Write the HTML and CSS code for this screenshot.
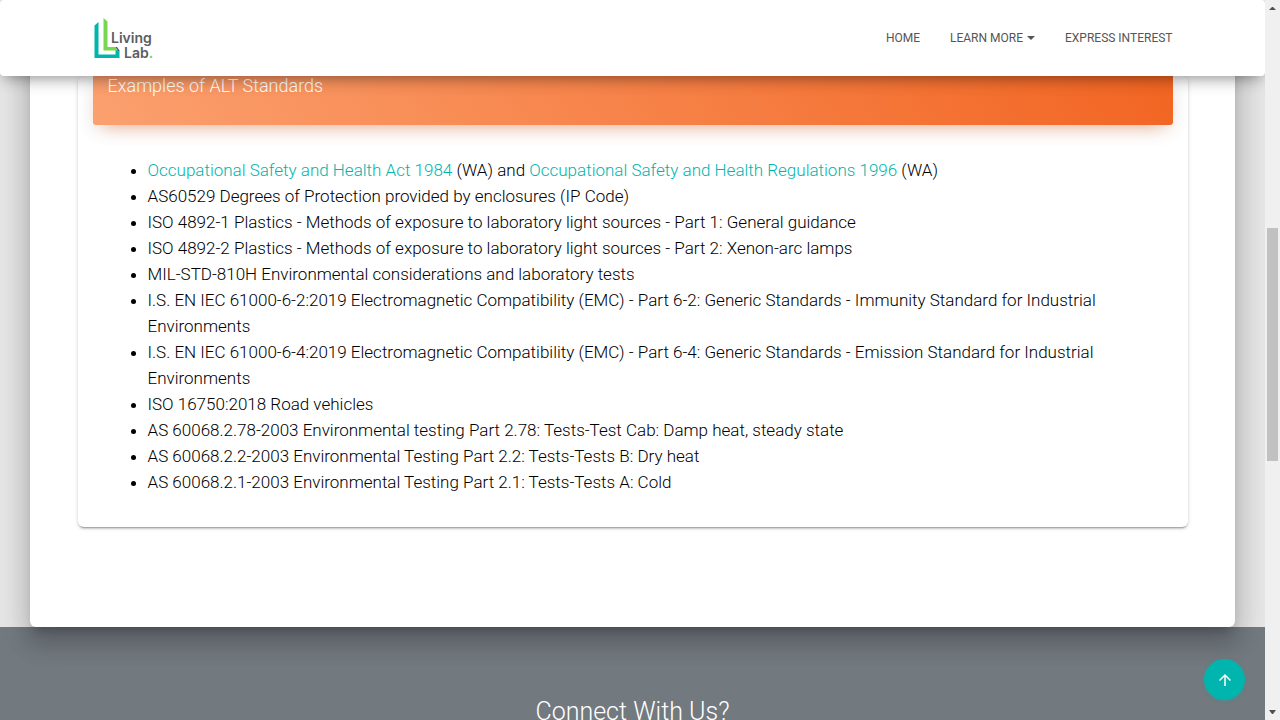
FILE: index.html
```html
<!DOCTYPE html>
<html lang="en">
<head>
<meta charset="utf-8">
<meta name="viewport" content="width=device-width, initial-scale=1">
<title>Living Lab - ALT Standards</title>
<link rel="stylesheet" href="styles.css">
</head>
<body>
<div class="viewport">
  <div class="page">
    <header class="navbar">
      <nav class="navbar-inner">
        <a class="brand" href="#" aria-label="Living Lab home">
          <svg width="66" height="44" viewBox="0 0 66 44">
            <path fill="#00b5ad" d="M1.500 9.500 5.500 6V38.500H22.500V34H26.500V42H1.500Z"/>
            <path fill="#76d750" d="M10.500 2 14.500 5.500V31H22.500L25 34.500H10.500Z"/>
            <path fill="#4b5057" d="M22.500 31H24L26.500 34.500H25Z"/>
            <g class="brand-text">
              <text x="18" y="27">Living</text>
              <text x="31" y="42">Lab<tspan class="brand-dot">.</tspan></text>
            </g>
          </svg>
        </a>
        <ul class="menu">
          <li><a class="menu-link" href="#">Home</a></li>
          <li><button class="menu-link" type="button" aria-haspopup="true">Learn More<span class="caret"></span></button></li>
          <li><a class="menu-link" href="#">Express Interest</a></li>
        </ul>
      </nav>
    </header>

    <main class="main-raised">
      <section class="container">
        <article class="card">
          <h4 class="card-header">Examples of ALT Standards</h4>
          <ul class="standards">
            <li><a href="#">Occupational Safety and Health Act 1984</a> (WA) and <a href="#">Occupational Safety and Health Regulations 1996</a> (WA)</li>
            <li>AS60529 Degrees of Protection provided by enclosures (IP Code)</li>
            <li>ISO 4892-1 Plastics - Methods of exposure to laboratory light sources - Part 1: General guidance</li>
            <li>ISO 4892-2 Plastics - Methods of exposure to laboratory light sources - Part 2: Xenon-arc lamps</li>
            <li>MIL-STD-810H Environmental considerations and laboratory tests</li>
            <li>I.S. EN IEC 61000-6-2:2019 Electromagnetic Compatibility (EMC) - Part 6-2: Generic Standards - Immunity Standard for Industrial Environments</li>
            <li>I.S. EN IEC 61000-6-4:2019 Electromagnetic Compatibility (EMC) - Part 6-4: Generic Standards - Emission Standard for Industrial Environments</li>
            <li>ISO 16750:2018 Road vehicles</li>
            <li>AS 60068.2.78-2003 Environmental testing Part 2.78: Tests-Test Cab: Damp heat, steady state</li>
            <li>AS 60068.2.2-2003 Environmental Testing Part 2.2: Tests-Tests B: Dry heat</li>
            <li>AS 60068.2.1-2003 Environmental Testing Part 2.1: Tests-Tests A: Cold</li>
          </ul>
        </article>
      </section>
    </main>

    <footer class="footer">
      <h3 class="footer-title">Connect With Us?</h3>
    </footer>

    <button class="to-top" type="button" aria-label="Back to top">
      <svg width="18" height="18" viewBox="0 0 24 24"><path fill="#fff" d="M4 12l1.410 1.410L11 7.830V20h2V7.830l5.580 5.590L20 12l-8-8-8 8z"/></svg>
    </button>
  </div>

  <div class="scrollbar" aria-hidden="true">
    <svg width="15" height="17" viewBox="0 0 15 17"><path fill="#505050" d="M4 10 7 7H8L11 10Z"/></svg>
    <div class="track"><div class="thumb"></div></div>
    <svg width="15" height="17" viewBox="0 0 15 17"><path fill="#505050" d="M4 7H11L8 11H7Z"/></svg>
  </div>
</div>
</body>
</html>
```
FILE: styles.css
```css
* { box-sizing: border-box; }

body {
  margin: 0;
  font-family: Roboto, "Liberation Sans", sans-serif;
  font-weight: 300;
  color: #000;
  background: #e5e5e5;
}

a { color: #00b5ad; text-decoration: none; }

.viewport {
  display: grid;
  grid-template-columns: 1fr 15px;
  height: 100vh;
  overflow: hidden;
}

.page {
  position: relative;
  min-width: 0;
  overflow: hidden;
}

.navbar {
  position: relative;
  z-index: 3;
  background: #fff;
  border-radius: 4px;
  box-shadow: 0 4px 18px 0 rgba(0, 0, 0, .12), 0 7px 10px -5px rgba(0, 0, 0, .15), 0 8px 20px -10px rgba(0, 0, 0, .3);
}

.navbar-inner {
  display: flex;
  align-items: center;
  justify-content: space-between;
  max-width: 1080px;
  height: 76px;
  margin: 0 auto;
}

.brand { display: flex; }

.brand-text {
  font-family: Inter, sans-serif;
  font-size: 14px;
  font-weight: 600;
  fill: #5c5d61;
}

.brand-dot { fill: #76d750; }

.menu {
  display: flex;
  gap: 30px;
  margin: 0;
  padding: 0;
  list-style: none;
}

.menu li { display: flex; }

.menu-link {
  display: flex;
  align-items: center;
  gap: 4px;
  padding: 0;
  border: 0;
  background: none;
  font: 400 12px/20px Roboto, "Liberation Sans", sans-serif;
  text-transform: uppercase;
  color: #555;
}

.caret {
  border: 4px solid transparent;
  border-top-color: #555;
  border-bottom: 0;
}

.main-raised {
  position: relative;
  z-index: 2;
  margin: -60px 30px 0;
  padding: 60px 0 100px;
  background: #fff;
  border-radius: 6px;
  box-shadow: 0 16px 24px 2px rgba(0, 0, 0, .14), 0 6px 30px 5px rgba(0, 0, 0, .12), 0 8px 10px -5px rgba(0, 0, 0, .2);
}

.container {
  max-width: 1140px;
  margin: 0 auto;
  padding: 0 15px;
}

.card {
  padding: 0 15px 32px;
  border-radius: 6px;
  background: #fff;
  box-shadow: 0 2px 2px 0 rgba(0, 0, 0, .14), 0 3px 1px -2px rgba(0, 0, 0, .2), 0 1px 5px 0 rgba(0, 0, 0, .12);
}

.card-header {
  margin: 0 0 32px;
  padding: 0 15px 29px;
  border-radius: 0 0 3px 3px;
  background: linear-gradient(60deg, #fba06f, #f26522);
  box-shadow: 0 4px 20px 0 rgba(0, 0, 0, .08), 0 10px 18px -10px rgba(242, 101, 34, .5);
  color: #fff;
  font-size: 18px;
  font-weight: 300;
  line-height: 20px;
}

.standards {
  margin: 0;
  padding: 0 15px 0 55px;
  font-size: 17px;
  line-height: 26px;
}

.footer {
  padding: 65px 15px;
  background: #72797f;
  color: #fff;
  text-align: center;
}

.footer-title {
  margin: 0;
  font-size: 25px;
  font-weight: 300;
  line-height: 40px;
}

.to-top {
  position: absolute;
  right: 20px;
  bottom: 20px;
  z-index: 4;
  display: grid;
  place-items: center;
  width: 41px;
  height: 41px;
  padding: 0;
  border: 0;
  border-radius: 50%;
  background: #00b5ad;
  box-shadow: 0 2px 2px 0 rgba(0, 181, 173, .14), 0 1px 5px 0 rgba(0, 181, 173, .12);
}

.scrollbar {
  display: flex;
  flex-direction: column;
  background: #f0f0f0;
}

.scrollbar svg { display: block; }

.track {
  flex: 1;
  padding: 0 2px;
}

.thumb {
  height: 34%;
  margin-top: 211px;
  background: #c1c1c1;
}
```
